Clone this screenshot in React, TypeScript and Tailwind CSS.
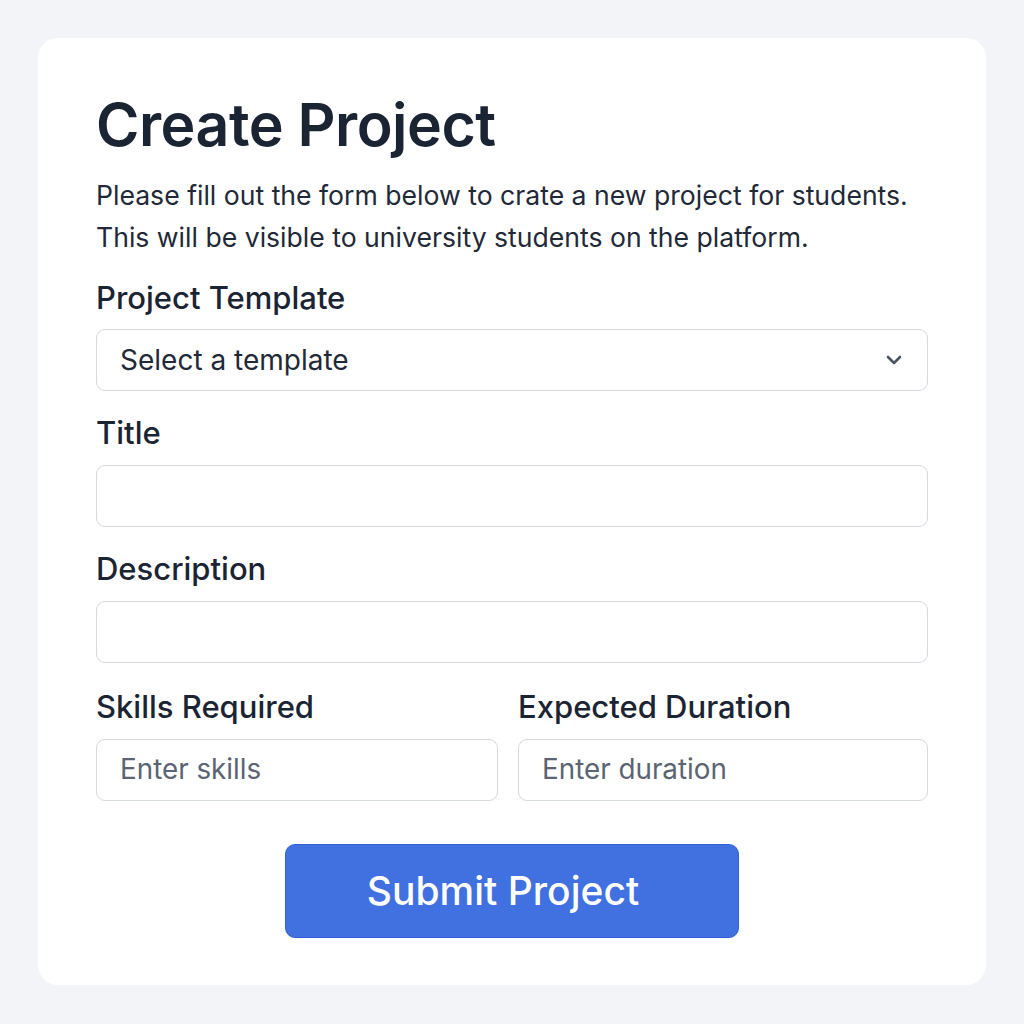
import React from "react";

export default function App() {
  const font = { fontFamily: "Inter, 'Noto Sans', sans-serif" };
  return (
    <div className="min-h-[1024px] w-[1024px] bg-[#f2f4f8] pt-[38px] pl-[38px]" style={font}>
      <div className="w-[948px] h-[947px] bg-white rounded-[20px] px-[58px] pt-[53px] flex flex-col">
        <h1 className="text-[59px] font-semibold leading-[68px] text-[#1b2433] tracking-[-0.5px]">Create Project</h1>
        <p className="mt-[15px] text-[26.6px] leading-[42px] text-[#1f2937] whitespace-nowrap">
          Please fill out the form below to crate a new project for students.
          <br />
          This will be visible to university students on the platform.
        </p>
        <label className="mt-[20px] text-[31px] font-medium leading-[40px] text-[#1b2433]">Project Template</label>
        <div className="mt-[11px] h-[62px] w-full border border-[#d5d9e0] rounded-[9px] flex items-center justify-between pl-[23px] pr-[24px]">
          <span className="text-[28px] text-[#1f2937]">Select a template</span>
          <svg width="18" height="12" viewBox="0 0 18 12" fill="none">
            <path d="M3 3l6 6 6-6" stroke="#4b5563" strokeWidth="2.6" strokeLinecap="round" strokeLinejoin="round" />
          </svg>
        </div>
        <label className="mt-[22px] text-[31px] font-medium leading-[40px] text-[#1b2433]">Title</label>
        <div className="mt-[12px] h-[62px] w-full border border-[#d5d9e0] rounded-[9px]" />
        <label className="mt-[22px] text-[31px] font-medium leading-[40px] text-[#1b2433]">Description</label>
        <div className="mt-[12px] h-[62px] w-full border border-[#d5d9e0] rounded-[9px]" />
        <div className="mt-[24px] grid grid-cols-[402px_1fr] gap-[20px]">
          <div className="flex flex-col">
            <label className="text-[31px] font-medium leading-[40px] text-[#1b2433] whitespace-nowrap">Skills Required</label>
            <div className="mt-[12px] h-[62px] border border-[#d5d9e0] rounded-[9px] flex items-center pl-[23px]">
              <span className="text-[27.8px] text-[#5b6472]">Enter skills</span>
            </div>
          </div>
          <div className="flex flex-col">
            <label className="text-[31px] font-medium leading-[40px] text-[#1b2433] whitespace-nowrap">Expected Duration</label>
            <div className="mt-[12px] h-[62px] border border-[#d5d9e0] rounded-[9px] flex items-center pl-[23px]">
              <span className="text-[27.8px] text-[#5b6472]">Enter duration</span>
            </div>
          </div>
        </div>
        <div className="mt-[43px] flex justify-center">
          <button className="w-[454px] h-[94px] rounded-[10px] bg-[#4170e0] border border-[#3563d6] text-white text-[39px] font-medium pr-[18px]">
            Submit Project
          </button>
        </div>
      </div>
    </div>
  );
}
